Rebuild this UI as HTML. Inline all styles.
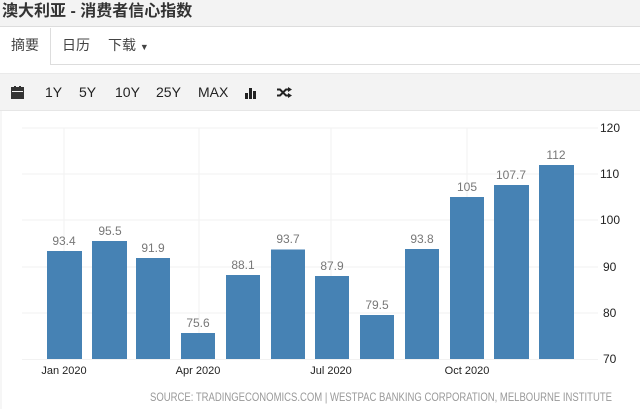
<!DOCTYPE html>
<html><head><meta charset="utf-8"><style>
body{margin:0;width:640px;height:409px;overflow:hidden;background:#fff;font-family:"Liberation Sans","Noto Sans CJK SC",sans-serif;position:relative}
.title{position:absolute;left:0;top:0;width:640px;height:27px;background:#f3f3f3;border-bottom:1px solid #ddd;font-weight:bold;font-size:16px;color:#333;line-height:24px;padding-left:2px;box-sizing:border-box}
.tabs{position:absolute;left:0;top:28px;width:640px;height:37px;border-bottom:1px solid #ddd;box-sizing:border-box;font-size:14px;color:#444}
.tab{position:absolute;top:0;height:36px;line-height:34px}
.act{left:0;width:50px;border-right:1px solid #ddd;background:#fff;height:37px;text-align:center}
.tb{position:absolute;left:0;top:73px;width:640px;height:38px;background:#f3f3f3;border-top:1px solid #eaeaea;border-bottom:1px solid #e6e6e6;box-sizing:border-box;font-size:14px;color:#222}
.tb span{position:absolute;top:10px}
</style></head><body>
<div class="title">澳大利亚 - 消费者信心指数</div>
<div class="tabs">
<div class="tab act">摘要</div>
<div class="tab" style="left:62px">日历</div>
<div class="tab" style="left:108px">下载 <span style="font-size:9px">▼</span></div>
</div>
<div class="tb">
<svg style="position:absolute;left:11px;top:12px" width="13" height="13" viewBox="0 0 13 13"><rect x="0" y="1" width="13" height="12" fill="#333"/><rect x="1" y="5" width="11" height="1" fill="#f3f3f3"/><rect x="3" y="0" width="2" height="3" fill="#333"/><rect x="8" y="0" width="2" height="3" fill="#333"/></svg>
<span style="left:45px">1Y</span><span style="left:79px">5Y</span><span style="left:115px">10Y</span><span style="left:156px">25Y</span><span style="left:198px">MAX</span>
<svg style="position:absolute;left:245px;top:12px" width="13" height="13" viewBox="0 0 13 13"><rect x="0" y="7" width="3" height="6" fill="#222"/><rect x="4" y="2" width="3" height="11" fill="#222"/><rect x="8" y="5" width="3" height="8" fill="#222"/></svg>
<svg style="position:absolute;left:277px;top:13px" width="15" height="11" viewBox="0 0 15 11"><path d="M0 2.5h3l6 6h3M0 8.5h3l6-6h3" stroke="#222" stroke-width="2" fill="none"/><path d="M11 0l4 2.5-4 2.5zM11 6l4 2.5-4 2.5z" fill="#222"/></svg>
</div>
<svg style="position:absolute;left:0;top:111px" width="640" height="298" viewBox="0 111 640 298" font-family="Liberation Sans, sans-serif">
<line x1="1" y1="111" x2="1" y2="409" stroke="#eee"/>
<g stroke="#f2f2f2" stroke-width="1">
<line x1="22" y1="128" x2="598" y2="128"/><line x1="22" y1="174" x2="598" y2="174"/><line x1="22" y1="220" x2="598" y2="220"/><line x1="22" y1="267" x2="598" y2="267"/><line x1="22" y1="313" x2="598" y2="313"/><line x1="22" y1="359.5" x2="598" y2="359.5"/>
<line x1="64" y1="128" x2="64" y2="359"/><line x1="199" y1="128" x2="199" y2="359"/><line x1="331" y1="128" x2="331" y2="359"/><line x1="467" y1="128" x2="467" y2="359"/>
</g>
<g fill="#4682b4">
<rect x="47" y="251" width="35" height="108"/><rect x="92" y="241" width="35" height="118"/><rect x="136" y="258" width="34" height="101"/><rect x="181" y="333" width="34" height="26"/><rect x="226" y="275" width="34" height="84"/><rect x="271" y="249.5" width="34" height="109.5"/><rect x="315" y="276" width="34" height="83"/><rect x="360" y="315" width="34" height="44"/><rect x="405" y="249" width="34" height="110"/><rect x="450" y="197" width="34" height="162"/><rect x="494" y="185" width="35" height="174"/><rect x="539" y="165" width="35" height="194"/>
</g>
<g fill="#777" font-size="12" text-anchor="middle">
<text x="64" y="245">93.4</text><text x="110" y="235">95.5</text><text x="153" y="252">91.9</text><text x="198" y="327">75.6</text><text x="243" y="269">88.1</text><text x="288" y="243">93.7</text><text x="332" y="270">87.9</text><text x="377" y="309">79.5</text><text x="422" y="243">93.8</text><text x="467" y="191">105</text><text x="511" y="179">107.7</text><text x="556" y="159">112</text>
</g>
<g fill="#222" font-size="12">
<text x="600" y="132">120</text><text x="600" y="178">110</text><text x="600" y="224">100</text><text x="603" y="271">90</text><text x="603" y="317">80</text><text x="603" y="363">70</text>
</g>
<g fill="#222" font-size="11" text-anchor="middle">
<text x="64" y="374">Jan 2020</text><text x="198" y="374">Apr 2020</text><text x="331" y="374">Jul 2020</text><text x="467" y="374">Oct 2020</text>
</g>
<text x="150" y="401" textLength="462" lengthAdjust="spacingAndGlyphs" fill="#999" font-size="12">SOURCE: TRADINGECONOMICS.COM | WESTPAC BANKING CORPORATION, MELBOURNE INSTITUTE</text>
</svg>
</body></html>
